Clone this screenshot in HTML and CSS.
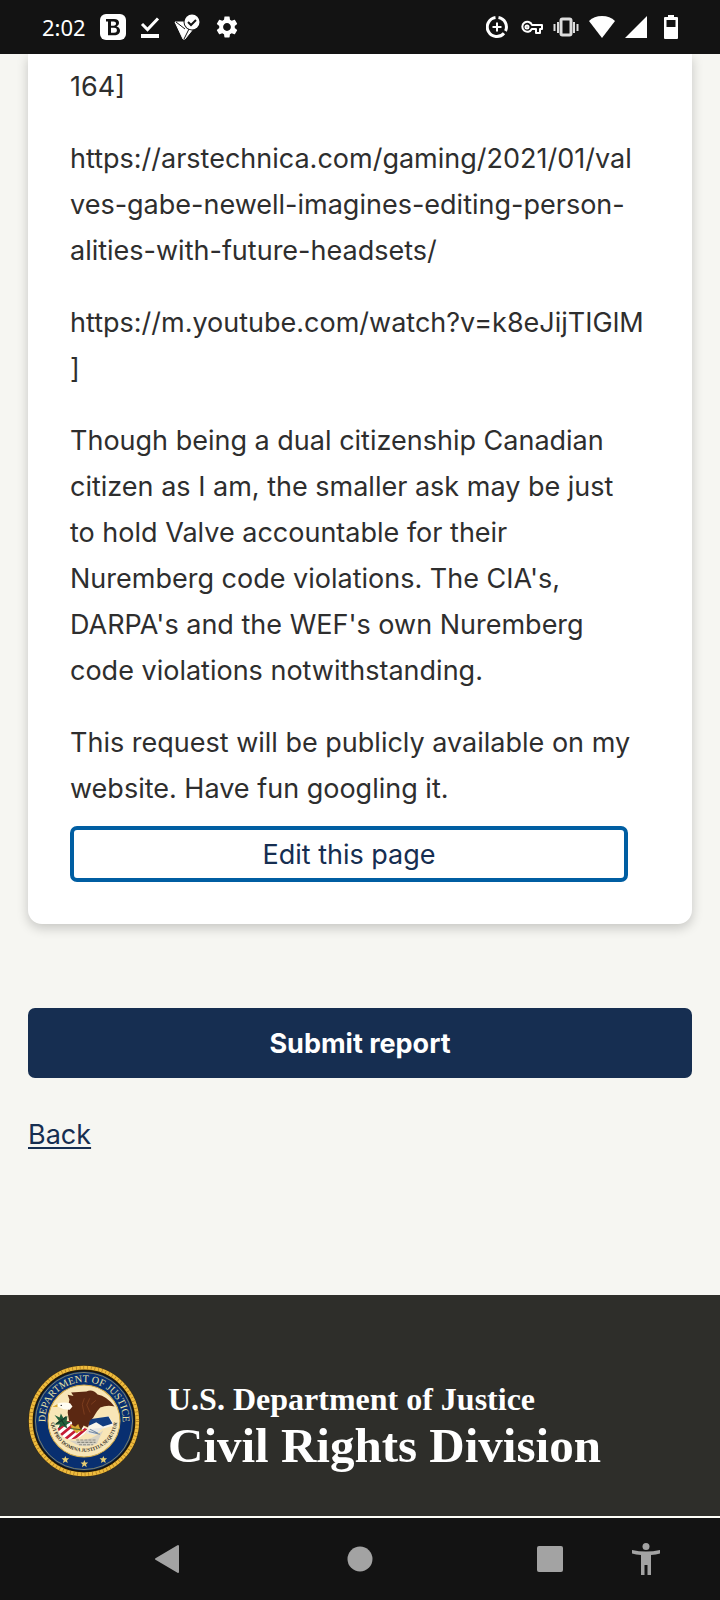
FILE: index.html
```html
<!DOCTYPE html>
<html lang="en">
<head>
    <meta charset="utf-8">
    <meta name="viewport" content="width=device-width, initial-scale=1.0">
    <title>Civil Rights Division - Review your report</title>
    <link rel="stylesheet" href="styles.css">
</head>
<body>
    <!-- Status bar -->
    <header class="status-bar">
        <div class="status-left">
            <span class="clock">2:02</span>
            <svg width="26" height="26" viewBox="0 0 26 26">
                <rect width="26" height="26" rx="6" fill="#fff"/>
                <path d="M6 5h8c3.500 0 5 1.500 5 3.800 0 1.800-1 3-2.500 3.600 2.200.5 3.500 2 3.500 4.100 0 3-2 4.800-5.800 4.800H8V7.400H6zM11 7.500v4.200h2.500c1.700 0 2.500-.8 2.500-2.100s-.8-2.100-2.500-2.100zm0 6.300v5h3c1.900 0 2.900-.8 2.900-2.500s-1-2.500-2.900-2.500z" fill="#131313" fill-rule="evenodd"/>
            </svg>
            <svg width="20" height="26" viewBox="0 0 20 26" fill="none" stroke="#fff">
                <path d="M2 10l5.500 5.500L18 4.500" stroke-width="3"/>
                <path d="M1 22h18" stroke-width="4"/>
            </svg>
            <svg width="26" height="26" viewBox="0 0 26 26">
                <path d="M1 8h11l3 6 4 1-8 10H9z" fill="#fff" stroke="#fff" stroke-linejoin="round"/>
                <path d="M2 8l9 7M16 13l-6 12" fill="none" stroke="#131313" stroke-width="1"/>
                <circle cx="18" cy="8" r="8.500" fill="#131313"/>
                <circle cx="18" cy="8" r="7.500" fill="#fff"/>
                <path d="M14 8l3 3 5-5" fill="none" stroke="#131313" stroke-width="2"/>
            </svg>
            <svg width="26" height="26" viewBox="0 0 24 24">
                <path d="M19.140 12.940c.04-.3.060-.61.060-.94 0-.32-.02-.64-.07-.94l2.030-1.580c.18-.14.230-.41.120-.61l-1.920-3.320c-.12-.22-.37-.29-.59-.22l-2.390.96c-.5-.38-1.030-.7-1.620-.94l-.36-2.540c-.04-.24-.24-.41-.48-.41h-3.840c-.24 0-.43.170-.47.410l-.36 2.540c-.59.240-1.130.570-1.620.940l-2.390-.96c-.22-.08-.47 0-.59.220L2.740 8.870c-.12.210-.08.470.120.610l2.030 1.580c-.05.300-.09.630-.09.940s.02.640.070.940l-2.030 1.580c-.18.140-.23.410-.12.610l1.920 3.320c.12.220.370.290.590.220l2.390-.96c.5.380 1.030.700 1.620.940l.36 2.540c.05.240.240.410.480.410h3.840c.24 0 .44-.17.470-.41l.36-2.540c.59-.24 1.130-.56 1.620-.94l2.390.960c.22.080.470 0 .59-.22l1.920-3.320c.12-.22.070-.47-.12-.61zM12 15.600c-1.980 0-3.600-1.620-3.600-3.600s1.620-3.600 3.600-3.600 3.600 1.620 3.600 3.600-1.620 3.600-3.600 3.600z" fill="#fff"/>
            </svg>
        </div>
        <div class="status-right">
            <svg class="data-saver" width="22" height="26" viewBox="0 0 22 26" fill="none" stroke="#fff">
                <path d="M12.500 3.600A9.500 9.500 0 0 1 19.500 17M18 19.200A9.500 9.500 0 1 1 9.500 3.600" stroke-width="3"/>
                <path d="M11 8.500v9M6.500 13h9" stroke-width="2"/>
            </svg>
            <svg width="22" height="26" viewBox="0 0 22 26" fill="none" stroke="#fff" stroke-width="2">
                <path d="M11 11h10v4h-2v4h-4v-4h-4.200a5 5 0 1 1 .2-4z" stroke-linejoin="round"/>
                <circle cx="6" cy="13" r="1.500"/>
            </svg>
            <svg width="26" height="26" viewBox="0 0 26 26" fill="none" stroke="#ddd" stroke-width="2">
                <rect x="8" y="5" width="10" height="16" rx="1.500" stroke-width="3"/>
                <path d="M5 8v11M21 8v11M1.500 10v7M24.500 10v7"/>
            </svg>
            <svg width="26" height="26" viewBox="0 0 26 26">
                <path d="M0 7Q5 2 13 2t13 5L13 24z" fill="#fff"/>
            </svg>
            <svg width="22" height="26" viewBox="0 0 22 26">
                <path d="M22 2v22H0z" fill="#fff"/>
            </svg>
            <svg class="battery" width="14" height="26" viewBox="0 0 14 26">
                <path d="M4 1h6v2h3q1 0 1 1v20q0 1-1 1H1q-1 0-1-1V4q0-1 1-1h3zM2.500 6v7h9V6z" fill="#fff" fill-rule="evenodd"/>
            </svg>
        </div>
    </header>

    <main class="page">
        <section class="card">
            <p>164]</p>
            <p>https://arstechnica.com/gaming/2021/01/val<br>ves-gabe-newell-imagines-editing-person-<br>alities-with-future-headsets/</p>
            <p>https://m.youtube.com/watch?v=k8eJijTIGlM<br>]</p>
            <p>Though being a dual citizenship Canadian<br>citizen as I am, the smaller ask may be just<br>to hold Valve accountable for their<br>Nuremberg code violations. The CIA's,<br>DARPA's and the WEF's own Nuremberg<br>code violations notwithstanding.</p>
            <p>This request will be publicly available on my<br>website. Have fun googling it.</p>
            <button class="edit-button" type="button">Edit this page</button>
        </section>

        <button class="submit-button" type="submit">Submit report</button>
        <a class="back-link" href="#">Back</a>
    </main>

    <!-- Footer with the department seal -->
    <footer class="footer">
        <svg class="seal" width="112" height="112" viewBox="0 0 330 330" role="img" aria-label="Department of Justice seal">
            <defs>
                <path id="ring-top" d="M78 238A114 114 0 1 1 252 238"/>
                <path id="ring-motto" d="M67 158A98 98 0 0 0 263 158"/>
                <path id="star" d="M0-11L3-4H11L5 2 7 10 0 5-7 10-5 2-11-4h8z"/>
                <clipPath id="shield"><path d="M86 184Q102 160 128 166L176 190Q156 222 116 219Q94 210 86 184z"/></clipPath>
            </defs>
            <!-- rope border -->
            <circle cx="165" cy="165" r="164" fill="#3a2c0c"/>
            <circle cx="165" cy="165" r="157" fill="none" stroke="#eebb3c" stroke-width="11"/>
            <circle cx="165" cy="165" r="157" fill="none" stroke="#a87522" stroke-width="11" stroke-dasharray="2 9"/>
            <circle cx="165" cy="165" r="148" fill="#082f70" stroke="#17150e" stroke-width="4"/>
            <circle cx="165" cy="165" r="143" fill="none" stroke="#b7ab67" stroke-width="2"/>
            <circle cx="165" cy="165" r="106" fill="#f8e6b7" stroke="#d5ad4c" stroke-width="3"/>
            <text class="seal-name"><textPath href="#ring-top" startOffset="50%">DEPARTMENT OF JUSTICE</textPath></text>
            <text class="seal-motto"><textPath href="#ring-motto" startOffset="50%">QUI PRO DOMINA JUSTITIA SEQUITUR</textPath></text>
            <!-- shield and arrows -->
            <path d="M120 222Q178 232 222 192L210 216 203 232Q172 245 144 235z" fill="#d7d2c3"/>
            <path d="M142 221h58M145 228h54M150 235h42" stroke="#8b8c83" stroke-width="3" stroke-dasharray="9 3"/>
            <g clip-path="url(#shield)">
                <path d="M80 155h110v70H80z" fill="#fff"/>
                <path d="M70 206l55-45M78 222l70-58M98 228l66-54M120 230l60-50" stroke="#c51d35" stroke-width="8"/>
            </g>
            <path d="M176 170l60-20q14 14 16 28l-28 8-48 4z" fill="#f8f5e9"/>
            <path d="M181 160l56-8 12 20-28 9-20-12-23 11z" fill="#123d80"/>
            <path d="M175 190l47-6-25 22-26-5z" fill="#e5e6e4"/>
            <path d="M179 196l33 8M182 189l24 12" stroke="#758aa3" stroke-width="3"/>
            <!-- olive branch -->
            <path d="M78 147l15 8 4-12 7 13 12-6-2 16 12 3-13 7 3 11-14-8-13 9 5-13-15 1 12-12z" fill="#23613b"/>
            <path d="M82 173q17-6 30-21M96 158l13 20" fill="none" stroke="#163a29" stroke-width="3"/>
            <!-- eagle -->
            <path d="M119 119l3-17-5-14 17 3-7-10 45-3q19-8 33 9 26 4 50 35-22-5-42 3-8 8-15 20-6 14-16 19l-5 20-13-6-10 18-9-15-12 6-4-20-8-3-4-23z" fill="#5b2812"/>
            <path d="M166 98l-6 18 6 30M182 98l-9 20 10 22M200 104l-14 12" fill="none" stroke="#8a4622" stroke-width="2"/>
            <path d="M124 113q-20-6-37 1l-12 6 14 3q16 10 34 9l8-10z" fill="#fffdf2"/>
            <path d="M87 115l-15 8 15 1z" fill="#d9a72d"/>
            <circle cx="98" cy="119" r="2" fill="#222"/>
            <path d="M124 174l15 8 9-8 5 13 12 7-15 2-6 6-8-8-10-13z" fill="#d6a832"/>
            <path d="M125 187l32 4" stroke="#466029" stroke-width="3"/>
            <g fill="#e7cd72">
                <use href="#star" x="110" y="279"/>
                <use href="#star" x="166" y="291"/>
                <use href="#star" x="222" y="279"/>
            </g>
        </svg>
        <div class="footer-title">
            <span class="department">U.S. Department of Justice</span>
            <span class="division">Civil Rights Division</span>
        </div>
    </footer>

    <!-- System navigation -->
    <nav class="nav-bar">
        <button class="nav-back" type="button" aria-label="Back">
            <svg width="26" height="30" viewBox="0 0 26 30"><path d="M24 2v26L2 15z" fill="#a3a3a3" stroke="#a3a3a3" stroke-width="2" stroke-linejoin="round"/></svg>
        </button>
        <button type="button" aria-label="Home">
            <svg width="26" height="26" viewBox="0 0 26 26"><circle cx="13" cy="13" r="12.500" fill="#a3a3a3"/></svg>
        </button>
        <button type="button" aria-label="Recent apps">
            <svg width="28" height="28" viewBox="0 0 28 28"><rect x="1" y="1" width="26" height="26" rx="2" fill="#a3a3a3"/></svg>
        </button>
        <button type="button" aria-label="Accessibility">
            <svg width="28" height="32" viewBox="0 0 28 32" fill="#a3a3a3"><circle cx="14" cy="3.500" r="3.500"/><path d="M0 7q14 3 28 0v3.500q-4 1.200-9 1.500v20h-3.500V22h-3v10H9V12q-5-.3-9-1.500z"/></svg>
        </button>
    </nav>
</body>
</html>
```
FILE: styles.css
```css
* {
    box-sizing: border-box;
}
body {
    margin: 0;
    min-height: 100vh;
    display: flex;
    flex-direction: column;
    font-family: Inter, sans-serif;
    font-size: 27px;
    line-height: 46px;
    color: #2e2e2e;
    background-color: #f6f6f2;
}
button {
    font-family: inherit;
    font-size: inherit;
    cursor: pointer;
}
svg {
    display: block;
    flex-shrink: 0;
}

/* Status bar */
.status-bar {
    position: relative; /* keeps the card shadow under the bar */
    display: flex;
    justify-content: space-between;
    align-items: center;
    height: 54px;
    padding: 0 42px;
    background-color: #131313;
}
.status-left,
.status-right {
    display: flex;
    align-items: center;
}
.status-left {
    gap: 14px;
}
.status-right {
    gap: 10px;
}
.data-saver {
    margin-right: 3px;
}
.battery {
    margin-left: 7px;
}
.clock {
    font-family: "Noto Sans", sans-serif;
    font-size: 22px;
    line-height: 26px;
    color: #fff;
}

/* Page content */
.page {
    flex: 1;
    padding: 0 28px;
}
.card {
    padding: 10px 42px 42px;
    background-color: #fff;
    border-radius: 0 0 14px 14px;
    box-shadow: 0 4px 12px rgba(0, 0, 0, 0.2);
}
.card p {
    margin: 0 0 26px;
    white-space: nowrap;
}
.card p:last-of-type {
    margin-bottom: 14px;
}
.edit-button {
    display: block;
    width: calc(100% - 22px);
    height: 56px;
    padding: 0;
    color: #162e51;
    background-color: #fff;
    border: 4px solid #005ea2;
    border-radius: 7px;
}
.submit-button {
    display: block;
    width: 100%;
    height: 70px;
    margin-top: 84px;
    font-weight: bold;
    color: #fff;
    background-color: #162e51;
    border: none;
    border-radius: 7px;
}
.back-link {
    display: inline-block;
    margin-top: 34px;
    color: #162e51;
    text-decoration-thickness: 2px;
    text-underline-offset: 3px;
}

/* Footer */
.footer {
    display: flex;
    align-items: center;
    gap: 28px;
    padding: 70px 28px 39px;
    background-color: #2e2e2a;
    border-bottom: 2px solid #fffff8;
}
.footer-title {
    display: flex;
    flex-direction: column;
    padding-top: 6px;
    font-family: "Liberation Serif", serif;
    font-weight: bold;
    color: #fff;
    white-space: nowrap;
}
.department {
    font-size: 32px;
    line-height: 44px;
}
.division {
    font-size: 49px;
    line-height: 50px;
}
.seal-name,
.seal-motto {
    font-family: "Liberation Serif", serif;
    text-anchor: middle;
}
.seal-name {
    font-size: 30px;
    fill: #e9e2a5;
}
.seal-motto {
    font-size: 15px;
    font-weight: bold;
    fill: #38352b;
}

/* Navigation bar */
.nav-bar {
    display: grid;
    grid-template-columns: 102fr 130fr 256fr 124fr 68fr 40fr;
    height: 82px;
    background-color: #131313;
}
.nav-bar button {
    display: flex;
    align-items: center;
    justify-content: center;
    padding: 0;
    border: none;
    background: none;
}
.nav-bar .nav-back {
    grid-column: 2;
}
```
